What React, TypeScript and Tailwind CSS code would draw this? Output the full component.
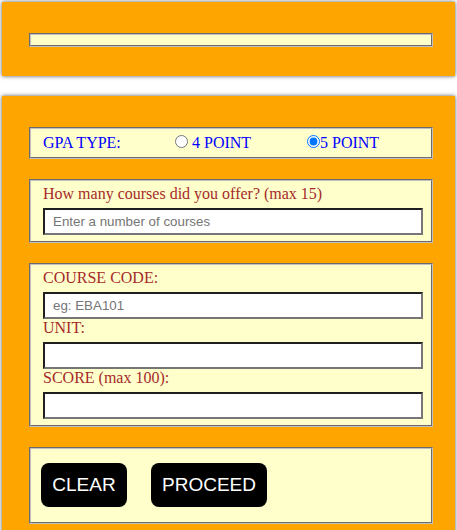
const fieldset =
  "border-2 [border-style:groove] border-[#c0c0c0] bg-[#ffffcc]";

const input =
  "block w-[380px] h-[27px] border-2 border-t-[#1f1f1f] border-l-[#1f1f1f] border-r-[#767676] border-b-[#767676] bg-white px-[8px] text-[13.33px] text-black placeholder:text-[#757575] outline-none";

function Field({ label, placeholder }: { label: string; placeholder?: string }) {
  return (
    <div className="flex flex-col">
      <label className="leading-[18px] text-[#a52a2a]">{label}</label>
      <input
        className={`${input} mt-[5px]`}
        style={{ fontFamily: '"Liberation Sans", Arial, sans-serif' }}
        placeholder={placeholder}
      />
    </div>
  );
}

export default function App() {
  return (
    <div
      className="min-h-screen bg-white px-[2px] pt-[2px] flex flex-col gap-[20px] text-[16px]"
      style={{ fontFamily: '"Liberation Serif", "Times New Roman", serif' }}
    >
      {/* top panel */}
      <div className="bg-[#ffa500] shadow-[0_0_4px_#555] pt-[31px] pb-[29px] pl-[27px] pr-[22px]">
        <div className={`${fieldset} h-[14px]`} />
      </div>

      {/* calculator panel */}
      <div className="bg-[#ffa500] shadow-[0_0_4px_#555] pt-[31px] pb-[20px] pl-[27px] pr-[22px] flex flex-col gap-[20px]">
        <div className={`${fieldset} h-[32px] flex items-center pl-[12px] leading-[18px] text-[#0000ff]`}>
          <span className="w-[132px]">GPA TYPE:</span>
          <input type="radio" name="gpa" className="w-[13px] h-[13px] m-0 mb-[4px]" />
          <span className="ml-[4px] w-[115px]">4 POINT</span>
          <input type="radio" name="gpa" defaultChecked className="w-[13px] h-[13px] m-0 mb-[4px]" />
          <span>5 POINT</span>
        </div>

        <div className={`${fieldset} pt-[4px] pb-[6px] pl-[12px]`}>
          <Field label="How many courses did you offer? (max 15)" placeholder="Enter a number of courses" />
        </div>

        <div className={`${fieldset} pt-[4px] pb-[6px] pl-[12px]`}>
          <Field label="COURSE CODE:" placeholder="eg: EBA101" />
          <Field label="UNIT:" />
          <Field label="SCORE (max 100):" />
        </div>

        <div
          className={`${fieldset} pt-[14px] pb-[15px] pl-[10px] flex gap-[24px]`}
          style={{ fontFamily: '"Liberation Sans", Arial, sans-serif' }}
        >
          <button className="w-[86px] h-[44px] rounded-lg bg-black text-white text-[19px]">CLEAR</button>
          <button className="w-[116px] h-[44px] rounded-lg bg-black text-white text-[19px]">PROCEED</button>
        </div>
      </div>
    </div>
  );
}
